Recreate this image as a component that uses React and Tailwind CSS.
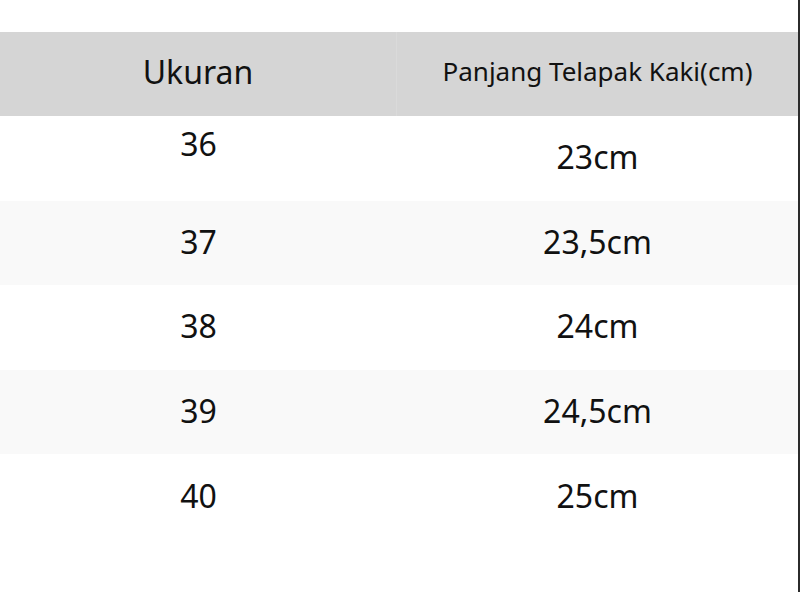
import React from "react";

const rows = [
  { size: "36", length: "23cm", top: true },
  { size: "37", length: "23,5cm" },
  { size: "38", length: "24cm" },
  { size: "39", length: "24,5cm" },
  { size: "40", length: "25cm" },
];

const App = () => {
  return (
    <div
      className="w-[800px] h-[592px] bg-white border-r-2 border-[#2b2b2b] text-[#111]"
      style={{ fontFamily: '"Noto Sans", "Open Sans", sans-serif' }}
    >
      <div className="pt-[32px]">
        <div className="flex h-[84px] bg-[#d5d5d5]">
          <div className="w-[397px] flex items-center justify-center pb-[4px] text-[32px] border-r border-[#dadada]">
            Ukuran
          </div>
          <div className="flex-1 flex items-center justify-center pb-[5px] text-[26px]">
            Panjang Telapak Kaki(cm)
          </div>
        </div>
        {rows.map((row, i) => (
          <div
            key={row.size}
            className={`flex h-[84.6px] text-[32px] ${
              i % 2 === 1 ? "bg-[#f9f9f9]" : "bg-white"
            }`}
          >
            <div
              className={`w-[397px] flex justify-center leading-[1.5] ${
                row.top ? "items-start pt-[4px]" : "items-center pb-[2px]"
              }`}
            >
              {row.size}
            </div>
            <div className="flex-1 flex items-center justify-center pb-[2px]">
              {row.length}
            </div>
          </div>
        ))}
      </div>
    </div>
  );
};

export default App;
